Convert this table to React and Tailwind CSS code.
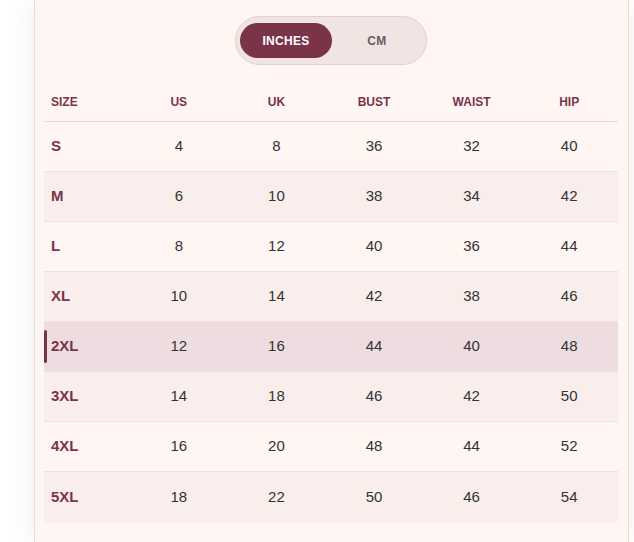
import { useState } from 'react';

const rows = [
  ['S', 4, 8, 36, 32, 40],
  ['M', 6, 10, 38, 34, 42],
  ['L', 8, 12, 40, 36, 44],
  ['XL', 10, 14, 42, 38, 46],
  ['2XL', 12, 16, 44, 40, 48],
  ['3XL', 14, 18, 46, 42, 50],
  ['4XL', 16, 20, 48, 44, 52],
  ['5XL', 18, 22, 50, 46, 54],
];

const heads = ['US', 'UK', 'BUST', 'WAIST', 'HIP'];

const App = () => {
  const [unit, setUnit] = useState('in');
  const active = '2XL';

  return (
    <div className="min-h-[542px] bg-white font-['Liberation_Sans',Arial,sans-serif]">
      <div className="ml-[34px] w-[595px] min-h-[542px] border-x border-[#ecd9d6] bg-[#fff6f4] pl-[9px] pr-[10px] pt-4 shadow-[0_0_28px_rgba(60,20,20,0.07)]">
        <div className="flex justify-center">
          <div className="flex h-[49px] w-[192px] items-center rounded-full border border-[#e3cfcb] bg-[#f0e5e2] p-1">
            <button
              onClick={() => setUnit('in')}
              className={`h-[35px] w-[92px] rounded-full text-[12px] font-bold tracking-wide ${unit === 'in' ? 'bg-[#7a3349] text-white' : 'text-[#6f5c60]'}`}
            >
              INCHES
            </button>
            <button
              onClick={() => setUnit('cm')}
              className={`h-[35px] flex-1 rounded-full text-[12px] font-bold tracking-wide ${unit === 'cm' ? 'bg-[#7a3349] text-white' : 'text-[#6f5c60]'}`}
            >
              CM
            </button>
          </div>
        </div>

        <div className="mt-4 w-[574px]">
          <div className="grid h-[41px] grid-cols-[86px_repeat(5,1fr)] items-center border-b border-[#ecd9d6] pt-px text-[12px] font-bold text-[#7a3349]">
            <div className="pl-[7px]">SIZE</div>
            {heads.map((h) => (
              <div key={h} className="text-center">{h}</div>
            ))}
          </div>
          {rows.map((r, i) => {
            const isActive = r[0] === active;
            const bg = isActive ? 'bg-[#eedde0]' : i % 2 ? 'bg-[#f9eeec]' : 'bg-[#fff6f4]';
            return (
              <div
                key={r[0]}
                className={`relative grid h-[50px] grid-cols-[86px_repeat(5,1fr)] items-center text-[15px] ${bg} ${i < rows.length - 1 ? 'border-b border-[#f0e2df]' : ''}`}
              >
                {isActive && <span className="absolute left-0 top-2 bottom-2 w-[3px] rounded-sm bg-[#7a3349]" />}
                <div className="pl-[7px] font-bold text-[#7a3349]">{r[0]}</div>
                {r.slice(1).map((v, j) => (
                  <div key={j} className="text-center text-[#333]">{unit === 'in' ? v : Math.round(v * 2.54)}</div>
                ))}
              </div>
            );
          })}
        </div>
      </div>
    </div>
  );
};

export default App;
